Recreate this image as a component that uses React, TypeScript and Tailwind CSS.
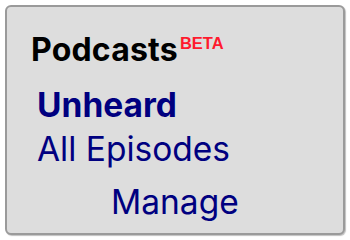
import React from "react";

const App = () => {
  return (
    <div className="w-[350px] h-[240px] bg-white p-[5px]">
      <div
        className="w-[340px] h-[230px] rounded-[6px] border-2 border-[#9a9a9a] bg-[#dddddd] shadow-[1px_1px_1px_rgba(0,0,0,0.25)] pl-[24px] pt-[27px]"
        style={{ fontFamily: "Inter, 'Liberation Sans', sans-serif" }}
      >
        <div className="flex items-start">
          <h2 className="text-[32px] leading-[32px] font-bold text-black tracking-[0.2px]">Podcasts</h2>
          <span
            className="ml-[2px] mt-[1px] text-[16.5px] leading-[16.5px] font-bold text-[#ff1a2e]"
            style={{ fontFamily: "'Liberation Sans', Arial, sans-serif" }}
          >
            BETA
          </span>
        </div>
        <nav className="flex flex-col pl-[6px] text-[#000080]">
          <a className="mt-[22px] text-[33.5px] leading-[34px] font-bold">Unheard</a>
          <a className="mt-[10px] text-[33.5px] leading-[34px]">All Episodes</a>
          <a className="mt-[19px] ml-[74px] text-[33.5px] leading-[34px]">Manage</a>
        </nav>
      </div>
    </div>
  );
};

export default App;
